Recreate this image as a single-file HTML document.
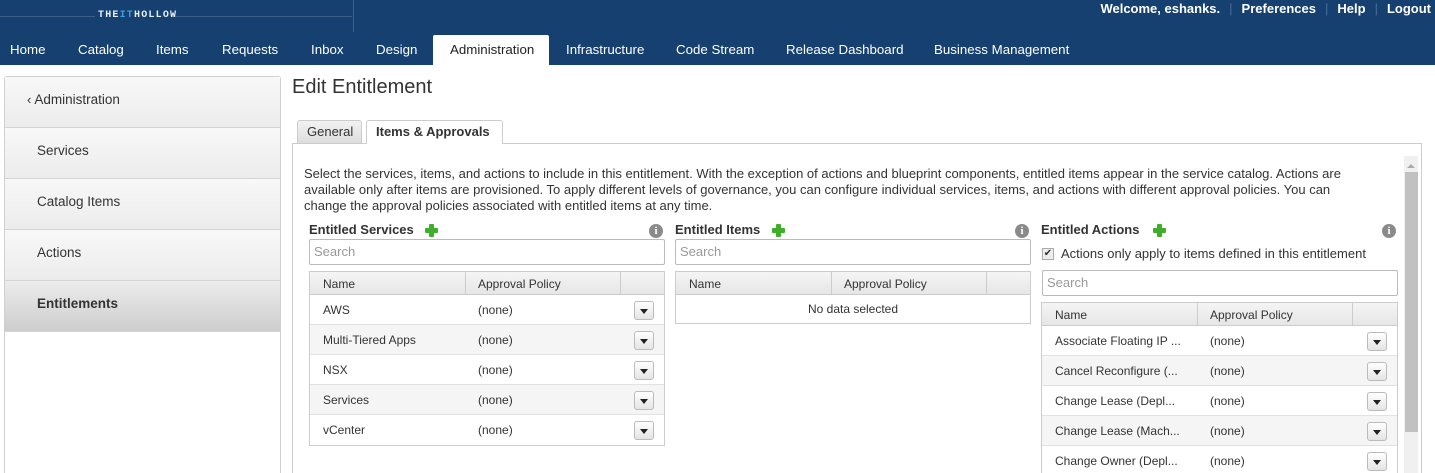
<!DOCTYPE html>
<html><head><style>
*{box-sizing:border-box;margin:0;padding:0}
html,body{width:1435px;height:473px;overflow:hidden}
body{background:#fff;font-family:"Liberation Sans",Arial,sans-serif;font-size:13px;color:#333;position:relative}
.abs{position:absolute}
.top{left:0;top:0;width:1435px;height:65px;background:#15406f}
.nav span{position:absolute;top:42px;color:#fff;font-size:13.3px}
.side{left:4px;top:76px;width:277px;height:400px;border:1px solid #d0d0d0;border-radius:3px 3px 0 0}
.si{position:absolute;left:0;width:275px;height:51px;border-bottom:1px solid #d4d4d4;background:linear-gradient(#f8f8f8,#ececec);font-size:13.5px;padding:15px 0 0 32px}
.tbl{position:absolute;border:1px solid #ccc;background:#fff}
.th{height:23px;background:linear-gradient(#f5f5f5,#e6e6e6);border-bottom:1px solid #ccc;position:relative;font-size:12px}
.th span{position:absolute;top:5px}
.row{height:30px;border-bottom:1px solid #e2e2e2;position:relative;font-size:12px}
.row:nth-child(odd){background:#f5f5f5}
.row span{position:absolute;top:8px}
.dd{position:absolute;top:6px;width:20px;height:19px;border:1px solid #bbb;border-radius:3px;background:linear-gradient(#fff,#e4e4e4)}
.dd:after{content:"";position:absolute;left:5px;top:7px;border:4px solid transparent;border-top:5px solid #222}
.srch{position:absolute;height:26px;border:1px solid #bbb;border-radius:2px;color:#999;font-size:13px;padding:4px 4px}
.h{position:absolute;font-weight:bold;font-size:13px;color:#333}
.plus{position:absolute;width:13px;height:13px}
.plus:before{content:"";position:absolute;left:4px;top:0;width:5px;height:13px;background:#3fae2a;border-radius:1px}
.plus:after{content:"";position:absolute;left:0;top:4px;width:13px;height:5px;background:#3fae2a;border-radius:1px}
.info{position:absolute;width:14px;height:14px;border-radius:50%;background:#8a8a8a;color:#fff;font-size:11px;font-weight:bold;text-align:center;line-height:14px;font-family:"Liberation Serif",serif}
</style></head><body>
<div class="abs top"></div>
<div class="abs" style="left:0;top:16px;width:95px;height:1px;background:#3b5f88"></div>
<div class="abs" style="left:172px;top:16px;width:180px;height:1px;background:#3b5f88"></div>
<div class="abs" style="left:353px;top:0;width:1px;height:32px;background:#3b5f88"></div>
<div class="abs" style="left:98px;top:10px;color:#e8eef5;font-size:10px;font-weight:bold;letter-spacing:1.2px;font-family:'Liberation Mono',monospace">THE<span style="color:#3aa0e0">IT</span>HOLLOW</div>
<div class="abs" style="right:4px;top:1px;color:#fff;font-size:13px;font-weight:bold;white-space:nowrap">Welcome, eshanks.<span style="color:#4a6c94;font-weight:normal;margin:0 9px">|</span>Preferences<span style="color:#4a6c94;font-weight:normal;margin:0 9px">|</span>Help<span style="color:#4a6c94;font-weight:normal;margin:0 9px">|</span>Logout</div>
<div class="abs" style="left:433px;top:35px;width:116px;height:31px;background:#fff;border-radius:2px 2px 0 0"></div>
<div class="nav">
<span style="left:10px">Home</span><span style="left:78px">Catalog</span><span style="left:156px">Items</span><span style="left:222px">Requests</span><span style="left:311px">Inbox</span><span style="left:376px">Design</span><span style="left:450px;color:#222">Administration</span><span style="left:566px">Infrastructure</span><span style="left:676px">Code Stream</span><span style="left:786px">Release Dashboard</span><span style="left:934px">Business Management</span>
</div>
<div class="abs side">
<div class="si" style="top:0;padding-top:15px"><span style="font-size:13px;margin-left:-10px;margin-right:3px">&lsaquo;</span>Administration</div>
<div class="si" style="top:51px">Services</div>
<div class="si" style="top:102px">Catalog Items</div>
<div class="si" style="top:153px">Actions</div>
<div class="si" style="top:204px;background:linear-gradient(#ececec,#cdcdcd);font-weight:bold">Entitlements</div>
</div>
<div class="abs" style="left:292px;top:76px;font-size:20px;color:#333">Edit Entitlement</div>
<div class="abs" style="left:297px;top:120px;width:65px;height:24px;background:linear-gradient(#f2f2f2,#ddd);border:1px solid #ccc;border-radius:3px 3px 0 0;font-size:13px;padding:3px 0 0 9px">General</div>
<div class="abs" style="left:366px;top:120px;width:137px;height:24px;background:#fff;border:1px solid #ccc;border-bottom:none;border-radius:3px 3px 0 0;font-size:13px;font-weight:bold;padding:3px 0 0 9px;z-index:2">Items &amp; Approvals</div>
<div class="abs" style="left:292px;top:143px;width:1130px;height:340px;border:1px solid #ccc"></div>
<div class="abs" style="left:1404px;top:156px;width:14px;height:320px;background:#f0f0f0"></div>
<div class="abs" style="left:1405px;top:172px;width:13px;height:260px;background:#c1c1c1"></div>
<div class="abs" style="left:1407px;top:160px;border:4px solid transparent;border-bottom:4px solid #aaa;width:0;height:0"></div>
<div class="abs" style="left:304px;top:166px;width:1062px;font-size:13px;line-height:16px;color:#333">Select the services, items, and actions to include in this entitlement. With the exception of actions and blueprint components, entitled items appear in the service catalog. Actions are available only after items are provisioned. To apply different levels of governance, you can configure individual services, items, and actions with different approval policies. You can change the approval policies associated with entitled items at any time.</div>

<div class="h" style="left:309px;top:222px">Entitled Services</div><div class="plus" style="left:425px;top:224px"></div><div class="info" style="left:649px;top:224px">i</div>
<div class="srch" style="left:309px;top:239px;width:356px">Search</div>
<div class="tbl" style="left:309px;top:271px;width:356px">
<div class="th"><span style="left:13px">Name</span><span style="left:168px">Approval Policy</span><div class="abs" style="left:155px;top:0;width:1px;height:22px;background:#ccc"></div><div class="abs" style="left:310px;top:0;width:1px;height:22px;background:#ccc"></div></div>
<div class="row"><span style="left:13px">AWS</span><span style="left:168px">(none)</span><div class="dd" style="left:324px"></div></div>
<div class="row"><span style="left:13px">Multi-Tiered Apps</span><span style="left:168px">(none)</span><div class="dd" style="left:324px"></div></div>
<div class="row"><span style="left:13px">NSX</span><span style="left:168px">(none)</span><div class="dd" style="left:324px"></div></div>
<div class="row"><span style="left:13px">Services</span><span style="left:168px">(none)</span><div class="dd" style="left:324px"></div></div>
<div class="row" style="border-bottom:none"><span style="left:13px">vCenter</span><span style="left:168px">(none)</span><div class="dd" style="left:324px"></div></div>
</div>

<div class="h" style="left:675px;top:222px">Entitled Items</div><div class="plus" style="left:772px;top:224px"></div><div class="info" style="left:1015px;top:224px">i</div>
<div class="srch" style="left:675px;top:239px;width:356px">Search</div>
<div class="tbl" style="left:675px;top:271px;width:356px">
<div class="th"><span style="left:13px">Name</span><span style="left:168px">Approval Policy</span><div class="abs" style="left:155px;top:0;width:1px;height:22px;background:#ccc"></div><div class="abs" style="left:310px;top:0;width:1px;height:22px;background:#ccc"></div></div>
<div style="height:28px;text-align:center;font-size:12px;padding-top:7px">No data selected</div>
</div>

<div class="h" style="left:1041px;top:222px">Entitled Actions</div><div class="plus" style="left:1153px;top:224px"></div><div class="info" style="left:1382px;top:224px">i</div>
<div class="abs" style="left:1042px;top:248px;width:12px;height:12px;border:1px solid #aaa;background:#eee;font-size:10px;line-height:10px;text-align:center">&#10004;</div>
<div class="abs" style="left:1061px;top:246px;font-size:13px">Actions only apply to items defined in this entitlement</div>
<div class="srch" style="left:1042px;top:270px;width:356px">Search</div>
<div class="tbl" style="left:1041px;top:302px;width:357px">
<div class="th"><span style="left:13px">Name</span><span style="left:168px">Approval Policy</span><div class="abs" style="left:155px;top:0;width:1px;height:22px;background:#ccc"></div><div class="abs" style="left:310px;top:0;width:1px;height:22px;background:#ccc"></div></div>
<div class="row"><span style="left:13px">Associate Floating IP ...</span><span style="left:168px">(none)</span><div class="dd" style="left:325px"></div></div>
<div class="row"><span style="left:13px">Cancel Reconfigure (...</span><span style="left:168px">(none)</span><div class="dd" style="left:325px"></div></div>
<div class="row"><span style="left:13px">Change Lease (Depl...</span><span style="left:168px">(none)</span><div class="dd" style="left:325px"></div></div>
<div class="row"><span style="left:13px">Change Lease (Mach...</span><span style="left:168px">(none)</span><div class="dd" style="left:325px"></div></div>
<div class="row"><span style="left:13px">Change Owner (Depl...</span><span style="left:168px">(none)</span><div class="dd" style="left:325px"></div></div>
</div>
</body></html>
